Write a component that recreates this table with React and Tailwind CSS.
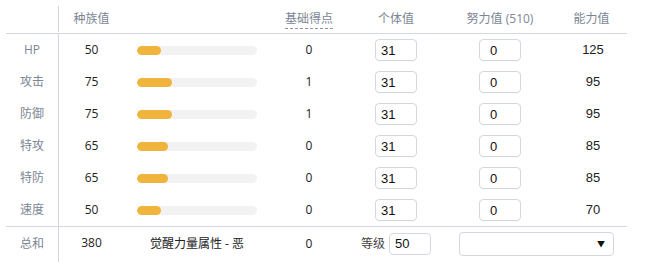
import { useState } from 'react';

const STATS = [
  { label: 'HP', base: 50, pts: 0, iv: 31, ev: 0, total: 125 },
  { label: '攻击', base: 75, pts: 1, iv: 31, ev: 0, total: 95 },
  { label: '防御', base: 75, pts: 1, iv: 31, ev: 0, total: 95 },
  { label: '特攻', base: 65, pts: 0, iv: 31, ev: 0, total: 85 },
  { label: '特防', base: 65, pts: 0, iv: 31, ev: 0, total: 85 },
  { label: '速度', base: 50, pts: 0, iv: 31, ev: 0, total: 70 },
];

const font = { fontFamily: '"Open Sans", "Noto Sans CJK SC", sans-serif' };
const inputCls =
  'h-[22px] w-[42px] rounded-[4px] border border-[#d3d8e0] bg-white text-[13px] text-[#111] outline-none font-["Liberation_Sans",sans-serif]';

// fixed column widths keep every row lined up like a table
const C1 = 'w-[52px] shrink-0 text-center text-[#7c8594]';
const C2 = 'w-[66px] shrink-0 text-center border-l border-[#d3d8e0] self-stretch flex items-center justify-center';
const C3 = 'w-[146px] shrink-0 flex items-center';
const C4 = 'w-[78px] shrink-0 text-center';
const C5 = 'w-[96px] shrink-0 flex justify-center';
const C6 = 'w-[112px] shrink-0 flex justify-center';
const C7 = 'w-[71px] shrink-0 text-center';

function StatRow({ s }) {
  const [iv, setIv] = useState(s.iv);
  const [ev, setEv] = useState(s.ev);
  return (
    <div className="flex h-[32px] items-center text-[12px] text-[#222]">
      <div className={C1}>{s.label}</div>
      <div className={C2}>{s.base}</div>
      <div className={C3}>
        <div className="ml-[13px] h-[9px] w-[120px] overflow-hidden rounded-full bg-[#f2f2f2]">
          <div className="h-full rounded-full bg-[#f0b33c]" style={{ width: `${(s.base / 255) * 120}px` }} />
        </div>
      </div>
      <div className={C4}>{s.pts}</div>
      <div className={C5}>
        <input className={`${inputCls} pl-[5px]`} value={iv} onChange={(e) => setIv(e.target.value)} />
      </div>
      <div className={C6}>
        <input className={`${inputCls} pl-[10px]`} value={ev} onChange={(e) => setEv(e.target.value)} />
      </div>
      <div className={`${C7} pl-[3px] text-[13px] font-["Liberation_Sans",sans-serif]`}>{s.total}</div>
    </div>
  );
}

export default function App() {
  const [level, setLevel] = useState(50);
  return (
    <div className="bg-white w-[645px] h-[262px] overflow-hidden pt-[6px] pl-[6px]" style={font}>
      <div className="w-[621px]">
        <div className="flex h-[28px] items-center border-b border-[#d3d8e0] pb-[1px] text-[12px] text-[#7c8594]">
          <div className={C1} />
          <div className={C2}>种族值</div>
          <div className={C3} />
          <div className={C4}>
            <span className="border-b border-dashed border-[#8c94a1] pb-[1px]">基础得点</span>
          </div>
          <div className={C5}>个体值</div>
          <div className={C6}>努力值 (510)</div>
          <div className={C7}>能力值</div>
        </div>

        {STATS.map((s) => (
          <StatRow key={s.label} s={s} />
        ))}

        <div className="flex h-[36px] items-start border-t border-[#d3d8e0] text-[12px] text-[#222]">
          <div className={`${C1} h-[33px] flex items-center justify-center`}>总和</div>
          <div className={C2}>
            <span className="mb-[3px]">380</span>
          </div>
          <div className={`${C3} h-[33px] justify-center`}>觉醒力量属性 - 恶</div>
          <div className={`${C4} h-[33px] flex items-center justify-center`}>0</div>
          <div className={`${C5} h-[33px] items-center gap-[4px]`}>
            <span className="text-[#444]">等级</span>
            <input className={`${inputCls} pl-[5px]`} value={level} onChange={(e) => setLevel(e.target.value)} />
          </div>
          <div className="ml-[15px] mt-[5px] flex h-[24px] w-[155px] items-center justify-end rounded-[4px] border border-[#d3d8e0] bg-white pr-[8px] text-[8px] text-[#111]">
            ▼
          </div>
        </div>
      </div>
    </div>
  );
}
